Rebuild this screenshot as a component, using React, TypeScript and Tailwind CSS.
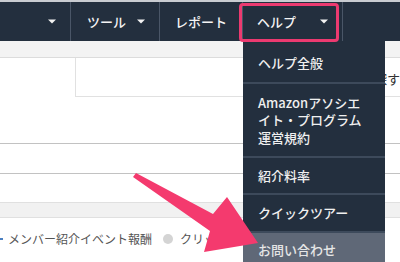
import React from 'react';

function Caret() {
  return (
    <svg width="8" height="5" viewBox="0 0 8 5" className="shrink-0">
      <path d="M0 0.5 L8 0.5 L4 4.5 Z" fill="#f2f2f2" />
    </svg>
  );
}

const menuItems = [
  { label: 'ヘルプ全般', cls: 'h-[43px] pt-[3px]' },
  { label: 'Amazonアソシエ\nイト・プログラム\n運営規約', cls: 'h-[74px]' },
  { label: '紹介料率', cls: 'h-[37px]' },
  { label: 'クイックツアー', cls: 'h-[38px]' },
];

export default function App() {
  return (
    <div
      className="relative w-[400px] h-[262px] overflow-hidden bg-white"
      style={{ fontFamily: '"Noto Sans CJK JP", "Noto Sans", sans-serif' }}
    >
      {/* top bar */}
      <div className="h-[2px] bg-[#c9ccd1]" />
      <nav className="flex h-[39px] bg-[#232f3e] text-[13px] text-[#f4f4f4] font-medium">
        <div className="w-[71px] flex items-center justify-end pr-[14px] border-r border-[#4a5667]">
          <Caret />
        </div>
        <div className="w-[89px] flex items-center pl-[16px] border-r border-[#4a5667]">
          <span>ツール</span>
          <span className="ml-[11px]"><Caret /></span>
        </div>
        <div className="w-[83px] flex items-center pl-[15px] border-r border-[#4a5667]">
          <span>レポート</span>
        </div>
        <div className="w-[100px] flex items-center pl-[14px] border-r border-[#4a5667]">
          <span>ヘルプ</span>
          <span className="ml-[24px]"><Caret /></span>
        </div>
        <div className="flex-1" />
      </nav>

      {/* page content */}
      <div className="h-[17px] bg-[#f3f3f3] border-b border-[#dcdcdc]" />
      <div className="flex h-[39px]">
        <div className="w-[88px]" />
        <div className="flex-1 border-l border-b border-[#e1e1e1] flex items-center pt-[4px]">
          <span className="ml-[298px] text-[13px] text-[#333] whitespace-nowrap">探す</span>
        </div>
      </div>
      <div className="h-[46px]" />
      <div className="h-[30px] border-t border-[#c2c2c2]" />
      <div className="h-[29px] border-t border-[#c2c2c2]" />
      <div className="h-[16px] bg-[#f1f1f1] border-t border-b border-[#e0e0e0]" />
      <div className="flex items-center h-[41px] text-[12px] text-[#555] whitespace-nowrap">
        <div className="w-[3px] h-[2px] bg-[#4a7fc1]" />
        <span className="ml-[5px]">メンバー紹介イベント報酬</span>
        <span className="ml-[11px] w-[10px] h-[10px] rounded-full bg-[#d4d4d4]" />
        <span className="ml-[7px]">クリック数</span>
      </div>

      {/* dropdown menu */}
      <div className="absolute left-[243px] top-[41px] w-[142px] bg-[#232f3e] text-[13px] text-[#f0f0f0] leading-[17.5px] font-medium">
        {menuItems.map((m, i) => (
          <div
            key={i}
            className={`${m.cls} flex items-center pl-[15px] border-b-2 border-[#3d4a5b] whitespace-pre-line`}
          >
            {m.label}
          </div>
        ))}
        <div className="h-[34px] flex items-center pl-[15px] bg-[#5f6877] text-[#e6e6e6]">お問い合わせ</div>
      </div>

      {/* highlight box */}
      <div className="absolute left-[239px] top-[3px] w-[100px] h-[39px] border-[3px] border-[#ec3a70] rounded-[4px]" />

      {/* arrow */}
      <svg className="absolute inset-0" width="400" height="262" viewBox="0 0 400 262">
        <path
          d="M133 177 L136 173 L213 214 L227 197 L258 243 L204 252 L210 231 Z"
          fill="#f43a6e"
        />
      </svg>
    </div>
  );
}
